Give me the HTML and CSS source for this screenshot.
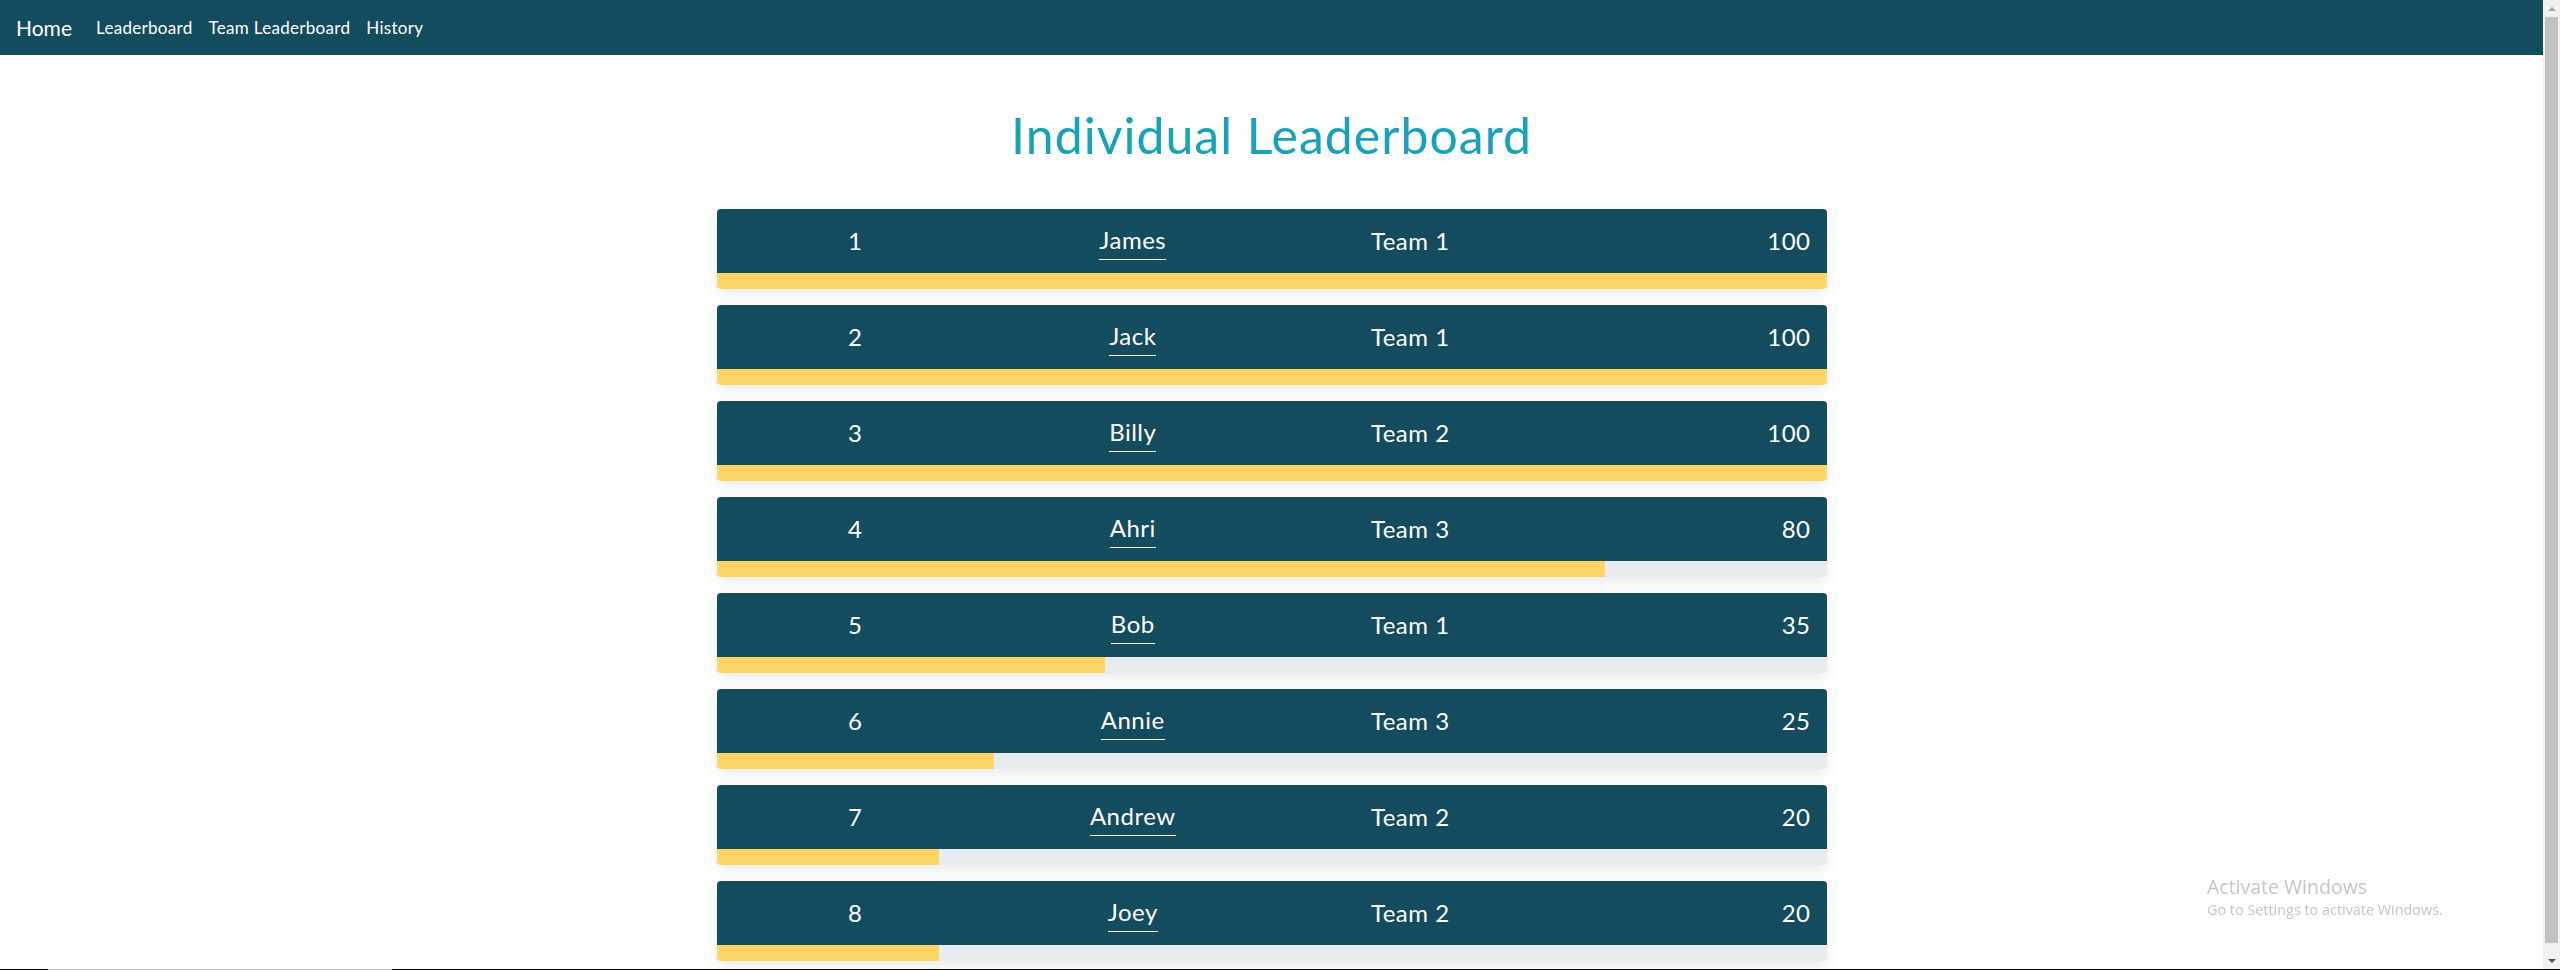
FILE: index.html
```html
<!DOCTYPE html>
<html lang="en">
<head>
<meta charset="utf-8">
<title>Individual Leaderboard</title>
<link rel="stylesheet" href="styles.css">
</head>
<body>
<div class="screen">
  <div class="page">
    <nav class="navbar">
      <a class="brand" href="#">Home</a>
      <a class="nav-link" href="#">Leaderboard</a>
      <a class="nav-link" href="#">Team Leaderboard</a>
      <a class="nav-link" href="#">History</a>
    </nav>
    <main class="container">
      <h1 class="title">Individual Leaderboard</h1>
      <div class="board">
        <div class="entry">
          <div class="entry-main"><span class="rank">1</span><span class="cell"><span class="name">James</span></span><span class="team">Team 1</span><span class="score">100</span></div>
          <div class="progress"><div class="bar" style="width:100%"></div></div>
        </div>
        <div class="entry">
          <div class="entry-main"><span class="rank">2</span><span class="cell"><span class="name">Jack</span></span><span class="team">Team 1</span><span class="score">100</span></div>
          <div class="progress"><div class="bar" style="width:100%"></div></div>
        </div>
        <div class="entry">
          <div class="entry-main"><span class="rank">3</span><span class="cell"><span class="name">Billy</span></span><span class="team">Team 2</span><span class="score">100</span></div>
          <div class="progress"><div class="bar" style="width:100%"></div></div>
        </div>
        <div class="entry">
          <div class="entry-main"><span class="rank">4</span><span class="cell"><span class="name">Ahri</span></span><span class="team">Team 3</span><span class="score">80</span></div>
          <div class="progress"><div class="bar" style="width:80%"></div></div>
        </div>
        <div class="entry">
          <div class="entry-main"><span class="rank">5</span><span class="cell"><span class="name">Bob</span></span><span class="team">Team 1</span><span class="score">35</span></div>
          <div class="progress"><div class="bar" style="width:35%"></div></div>
        </div>
        <div class="entry">
          <div class="entry-main"><span class="rank">6</span><span class="cell"><span class="name">Annie</span></span><span class="team">Team 3</span><span class="score">25</span></div>
          <div class="progress"><div class="bar" style="width:25%"></div></div>
        </div>
        <div class="entry">
          <div class="entry-main"><span class="rank">7</span><span class="cell"><span class="name">Andrew</span></span><span class="team">Team 2</span><span class="score">20</span></div>
          <div class="progress"><div class="bar" style="width:20%"></div></div>
        </div>
        <div class="entry">
          <div class="entry-main"><span class="rank">8</span><span class="cell"><span class="name">Joey</span></span><span class="team">Team 2</span><span class="score">20</span></div>
          <div class="progress"><div class="bar" style="width:20%"></div></div>
        </div>
      </div>
    </main>
  </div>
  <div class="scrollbar">
    <div class="sb-btn"><span class="arrow-up"></span></div>
    <div class="sb-track"><div class="sb-thumb"></div></div>
    <div class="sb-btn"><span class="arrow-down"></span></div>
  </div>
</div>
<div class="taskbar-edge"><span class="edge-dark"></span><span class="edge-light"></span><span class="edge-rest"></span></div>
<div class="watermark">
  <div class="wm-title">Activate Windows</div>
  <div class="wm-sub">Go to Settings to activate Windows.</div>
</div>
</body>
</html>
```
FILE: styles.css
```css
* { box-sizing: border-box; }
html, body { margin: 0; padding: 0; }
body {
  width: 2560px;
  height: 970px;
  overflow: hidden;
  background: #fff;
  font-family: "Lato", "Open Sans", sans-serif;
  display: flex;
  flex-direction: column;
}
.screen {
  display: flex;
  height: 969px;
  overflow: hidden;
}
.page {
  flex: 1;
  display: flex;
  flex-direction: column;
  min-width: 0;
}
.navbar {
  height: 55px;
  background: #134b5f;
  display: flex;
  align-items: center;
  padding: 0 16px;
  flex-shrink: 0;
}
.navbar a { color: #fff; text-decoration: none; }
.brand {
  font-size: 21px;
  margin-right: 16px;
  line-height: 30px;
}
.nav-link {
  font-size: 17px;
  letter-spacing: 0.3px;
  padding: 0 8px;
  line-height: 24px;
}
.container {
  width: 1110px;
  margin: 0 auto;
}
.title {
  margin: 50px 0 44px;
  text-align: center;
  color: #17a2b8;
  font-weight: 400;
  font-size: 50px;
  letter-spacing: 1px;
  line-height: 60px;
}
.board {
  display: flex;
  flex-direction: column;
  gap: 16px;
}
.entry {
  border-radius: 4px;
  box-shadow: 0 4px 14px rgba(0, 0, 0, 0.09);
}
.entry-main {
  height: 64px;
  background: #134b5f;
  border-radius: 4px 4px 0 0;
  display: grid;
  grid-template-columns: repeat(4, 1fr);
  align-items: center;
  color: #fff;
  font-size: 24px;
  letter-spacing: 0.5px;
  line-height: 36px;
}
.rank, .cell, .team { text-align: center; }
.score { text-align: right; padding-right: 16px; }
.name {
  display: inline-block;
  border-bottom: 1px solid #fff;
  padding-bottom: 1px;
}
.progress {
  height: 16px;
  background: #e9ecef;
  border-radius: 0 0 4px 4px;
  overflow: hidden;
}
.bar {
  height: 100%;
  background: #ffd666;
}
.scrollbar {
  width: 17px;
  background: #f1f1f1;
  display: flex;
  flex-direction: column;
  flex-shrink: 0;
}
.sb-btn {
  height: 17px;
  display: flex;
  align-items: center;
  justify-content: center;
}
.arrow-up, .arrow-down {
  width: 0; height: 0;
  border-left: 4px solid transparent;
  border-right: 4px solid transparent;
}
.arrow-up { border-bottom: 4px solid #a3a3a3; }
.arrow-down { border-top: 4px solid #505050; }
.sb-track {
  flex: 1;
  padding: 0 2px;
}
.sb-thumb {
  height: 926px;
  background: #c1c1c1;
}
.taskbar-edge {
  height: 1px;
  display: flex;
  background: #000;
}
.edge-dark { width: 48px; background: #000; }
.edge-light { width: 344px; background: #b9b9b9; }
.edge-rest { flex: 1; background: #000; }
.watermark {
  position: fixed;
  left: 2207px;
  top: 874px;
  color: #c6c6c6;
  font-family: "Open Sans", "Noto Sans", sans-serif;
  pointer-events: none;
}
.wm-title { font-size: 19.5px; line-height: 26px; }
.wm-sub { font-size: 14.4px; line-height: 20px; }
```
